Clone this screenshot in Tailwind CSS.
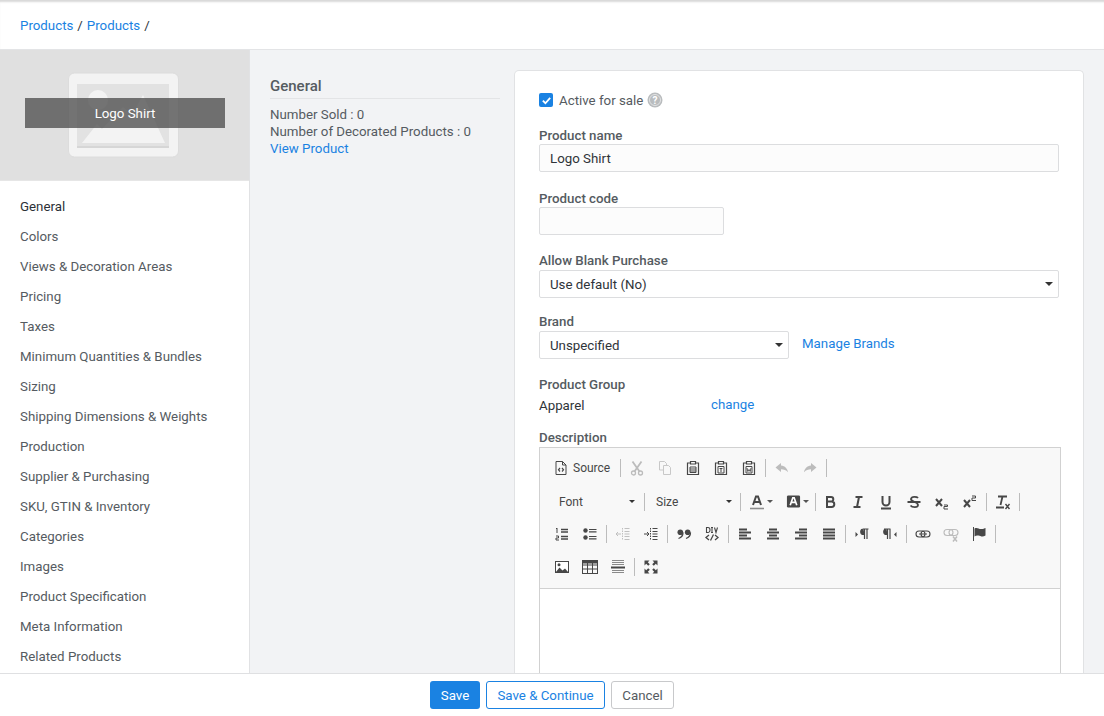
<!DOCTYPE html>
<html>
<head>
<meta charset="utf-8">
<script src="https://cdn.jsdelivr.net/npm/@tailwindcss/browser@4"></script>
</head>
<body class="w-[1104px] h-[716px] overflow-hidden bg-[#f2f3f5] font-['Roboto',sans-serif] text-[13.3px] leading-[18px] text-[#555b61]">
<svg class="hidden">
  <symbol id="paste" viewBox="0 0 16 16"><path d="M5 3H2.500v11.500h11V3H11M5.500 1.500h5V4h-5z" fill="none" stroke="currentColor" stroke-width="1.200"/><path d="M5 7h6v5.500H5zM5 9h6M5 11h6" fill="none" stroke="currentColor"/></symbol>
  <symbol id="pastet" viewBox="0 0 16 16"><path d="M5 3H2.500v11.500h11V3H11M5.500 1.500h5V4h-5z" fill="none" stroke="currentColor" stroke-width="1.200"/><path d="M5 6.500h6v6.500H5z" fill="none" stroke="currentColor"/><path d="M6.500 8.500h3M8 8.500V12" stroke="currentColor"/></symbol>
  <symbol id="pastew" viewBox="0 0 16 16"><path d="M5 3H2.500v11.500h11V3H11M5.500 1.500h5V4h-5z" fill="none" stroke="currentColor" stroke-width="1.200"/><path d="M5 6.500h6v6.500H5z" fill="none" stroke="currentColor"/><path d="M6 8l.8 3.500L8 9.500l1.200 2L10 8" fill="none" stroke="currentColor" stroke-width=".9"/></symbol>
  <symbol id="align" viewBox="0 0 16 16"><path d="M2 3.500h8M2 6.500h12M2 9.500h8M2 12.500h12" stroke="currentColor" stroke-width="2"/></symbol>
  <symbol id="center" viewBox="0 0 16 16"><path d="M4 3.500h8M2 6.500h12M4 9.500h8M2 12.500h12" stroke="currentColor" stroke-width="2"/></symbol>
  <symbol id="right" viewBox="0 0 16 16"><path d="M6 3.500h8M2 6.500h12M6 9.500h8M2 12.500h12" stroke="currentColor" stroke-width="2"/></symbol>
  <symbol id="just" viewBox="0 0 16 16"><path d="M2 3.500h12M2 6.500h12M2 9.500h12M2 12.500h12" stroke="currentColor" stroke-width="2"/></symbol>
</svg>

<div class="flex flex-col h-[716px]">
  <header class="h-[50px] shrink-0 bg-white border-b border-[#e3e4e6] shadow-[inset_0_3px_2px_-1px_#d9d9d9] flex items-center px-5 pt-[2px] text-[#2f3439]">
    <a class="text-[#1a82e2]">Products</a><span class="mx-[4px]">/</span><a class="text-[#1a82e2]">Products</a><span class="mx-[4px]">/</span>
  </header>

  <div class="flex flex-1 min-h-0 overflow-hidden">
    <aside class="w-[250px] shrink-0 bg-white border-r border-[#e1e2e4] overflow-hidden">
      <div class="h-[131px] bg-[#e0e0e0] border-b border-[#e6e6e6] relative flex items-center justify-center">
        <svg width="114" height="86" viewBox="0 0 114 86" class="ml-[1px] mt-[-1px]">
          <rect x=".5" y="1" width="110" height="84" rx="6" fill="#f3f3f3" stroke="#dcdcdc"/>
          <rect x="9" y="12" width="92" height="64" fill="#e2e2e2"/>
          <path d="M9 75h92" stroke="#d6d6d6" stroke-width="2"/>
          <circle cx="30" cy="28" r="10" fill="#f3f3f3"/>
          <path d="M14 71l15-19 5 5 21-22 9 8 11-20 22 48z" fill="#f3f3f3"/>
        </svg>
        <div class="absolute left-[25px] top-[48px] w-[200px] h-[30px] pt-[1px] bg-[#525252]/80 text-white flex items-center justify-center">Logo Shirt</div>
      </div>
      <nav class="flex flex-col pl-5 pt-[11px]">
        <a class="h-[30px] flex items-center text-[#2b3036]">General</a>
        <a class="h-[30px] flex items-center">Colors</a>
        <a class="h-[30px] flex items-center">Views &amp; Decoration Areas</a>
        <a class="h-[30px] flex items-center">Pricing</a>
        <a class="h-[30px] flex items-center">Taxes</a>
        <a class="h-[30px] flex items-center">Minimum Quantities &amp; Bundles</a>
        <a class="h-[30px] flex items-center">Sizing</a>
        <a class="h-[30px] flex items-center">Shipping Dimensions &amp; Weights</a>
        <a class="h-[30px] flex items-center">Production</a>
        <a class="h-[30px] flex items-center">Supplier &amp; Purchasing</a>
        <a class="h-[30px] flex items-center">SKU, GTIN &amp; Inventory</a>
        <a class="h-[30px] flex items-center">Categories</a>
        <a class="h-[30px] flex items-center">Images</a>
        <a class="h-[30px] flex items-center">Product Specification</a>
        <a class="h-[30px] flex items-center">Meta Information</a>
        <a class="h-[30px] flex items-center">Related Products</a>
      </nav>
    </aside>

    <section class="w-[264px] shrink-0 pl-5 pr-[14px] pt-[26px]">
      <h2 class="text-[15px] font-medium text-[#555b61] pb-[2px] border-b border-[#e3e4e6] leading-[20px]">General</h2>
      <div class="leading-[17px] pt-[7px]">
        <div>Number Sold : 0</div>
        <div>Number of Decorated Products : 0</div>
        <a class="text-[#1a82e2]">View Product</a>
      </div>
    </section>

    <main class="w-[570px] mt-5 bg-white border border-[#e1e2e4] rounded-t-[5px] border-b-0 pl-6 pr-[20px] pt-[19px] overflow-hidden">
      <div class="flex items-center h-[20px]">
        <span class="w-[14px] h-[14px] rounded-[2px] bg-[#1a82e2] flex items-center justify-center">
          <svg width="11" height="11" viewBox="0 0 12 12"><path d="M2 6.200l2.800 2.800L10 3.200" fill="none" stroke="#fff" stroke-width="2"/></svg>
        </span>
        <span class="ml-[6px] pt-[2px]">Active for sale</span>
        <svg class="ml-[4px]" width="16" height="16" viewBox="0 0 16 16"><circle cx="8" cy="8" r="7.500" fill="#b9bcbe"/><circle cx="8" cy="8" r="5.500" fill="none" stroke="#e2e3e4" stroke-width="1"/><text x="8" y="11.500" text-anchor="middle" font-size="10" font-weight="700" fill="#fff" font-family="Roboto">?</text></svg>
      </div>

      <label class="block mt-[17px] font-medium leading-[17px]">Product name</label>
      <div class="w-[520px] h-[28px] bg-[#fcfcfc] border border-[#dcdddf] rounded-[2px] flex items-center pl-[10px] pt-[2px] text-[#2f3439]">Logo Shirt</div>

      <label class="block mt-[18px] font-medium leading-[17px]">Product code</label>
      <div class="w-[185px] h-[28px] bg-[#fcfcfc] border border-[#dcdddf] rounded-[2px]"></div>

      <label class="block mt-[17px] font-medium leading-[17px]">Allow Blank Purchase</label>
      <div class="mt-[1px] w-[520px] h-[28px] bg-white border border-[#dcdddf] rounded-[2px] flex items-center justify-between pl-[10px] pr-[5px] text-[#2f3439]"><span class="pt-[2px]">Use default (No)</span><span class="w-0 h-0 border-x-[4px] border-x-transparent border-t-[4px] border-t-[#333]"></span></div>

      <label class="block mt-[15px] font-medium leading-[17px]">Brand</label>
      <div class="mt-[1px] flex items-start">
        <div class="w-[250px] h-[28px] bg-white border border-[#dcdddf] rounded-[2px] flex items-center justify-between pl-[10px] pr-[5px] text-[#2f3439]"><span class="pt-[2px]">Unspecified</span><span class="w-0 h-0 border-x-[4px] border-x-transparent border-t-[4px] border-t-[#333]"></span></div>
        <a class="ml-[13px] mt-[4px] text-[#1a82e2]">Manage Brands</a>
      </div>

      <label class="block mt-[17px] font-medium leading-[17px]">Product Group</label>
      <div class="flex mt-[4px] leading-[17px]"><span class="w-[172px] text-[#2f3439]">Apparel</span><a class="text-[#1a82e2] -mt-[1px]">change</a></div>

      <label class="block mt-[15px] font-medium leading-[17px]">Description</label>
      <div class="mt-[1px] w-[522px] h-[300px] border border-[#d1d1d1] bg-white">
        <div class="h-[141px] bg-[#f8f8f8] border-b border-[#d1d1d1] pl-[8px] pt-[4px] text-[#474747] text-[12px]">
          <!-- row 1 -->
          <div class="flex items-center h-[31px]">
            <div class="flex items-center w-[70px] pl-[5px]">
              <svg width="16" height="16" viewBox="0 0 16 16"><path d="M3 1.500h6.500L13 5v9.500H3z M9.500 1.500V5H13" fill="none" stroke="#474747"/><path d="M7 8L5.500 9.800 7 11.500M9 8l1.500 1.800L9 11.500" fill="none" stroke="#474747" stroke-width="1.200"/></svg>
              <span class="ml-[4px]">Source</span>
            </div>
            <span class="w-px h-[18px] bg-[#bcbcbc] ml-[2px] mr-[2px]"></span>
            <div class="w-[28px] flex justify-center text-[#bcbcbc]"><svg width="16" height="16" viewBox="0 0 16 16"><circle cx="4.500" cy="13" r="2" fill="none" stroke="currentColor" stroke-width="1.300"/><circle cx="11.500" cy="13" r="2" fill="none" stroke="currentColor" stroke-width="1.300"/><path d="M3.500 1.500l7 10M12.500 1.500l-7 10" stroke="currentColor" stroke-width="1.800"/></svg></div>
            <div class="w-[28px] flex justify-center text-[#c8c8c8]"><svg width="16" height="16" viewBox="0 0 16 16"><path d="M2.500 1.500h5l2 2V5M2.500 1.500v8.500H6M6.500 5.500h5l2 2v7h-7z" fill="none" stroke="currentColor"/></svg></div>
            <div class="w-[28px] flex justify-center"><svg width="16" height="16"><use href="#paste"/></svg></div>
            <div class="w-[28px] flex justify-center"><svg width="16" height="16"><use href="#pastet"/></svg></div>
            <div class="w-[28px] flex justify-center"><svg width="16" height="16"><use href="#pastew"/></svg></div>
            <span class="w-px h-[18px] bg-[#bcbcbc] ml-[2px] mr-[2px]"></span>
            <div class="w-[28px] flex justify-center text-[#bcbcbc]"><svg width="16" height="16" viewBox="0 0 16 16"><path d="M7 3L1.500 7.500 7 12V9.200c3 0 5 .8 7 3-.5-3.500-3-6.500-7-6.800z" fill="currentColor"/></svg></div>
            <div class="w-[28px] flex justify-center text-[#bcbcbc]"><svg width="16" height="16" viewBox="0 0 16 16"><path d="M9 3l5.500 4.500L9 12V9.200c-3 0-5 .8-7 3 .5-3.500 3-6.500 7-6.800z" fill="currentColor"/></svg></div>
            <span class="w-px h-[18px] bg-[#bcbcbc] ml-[2px] mr-[2px]"></span>
          </div>
          <!-- row 2 -->
          <div class="flex items-center h-[33px] mt-[2px]">
            <div class="w-[94px] pl-[11px] pr-[7px] flex items-center justify-between text-[#474747]">Font<span class="w-0 h-0 border-x-[3px] border-x-transparent border-t-[3px] border-t-[#333]"></span></div>
            <span class="w-px h-[18px] bg-[#bcbcbc] ml-[2px] mr-[2px]"></span>
            <div class="w-[91px] pl-[9px] pr-[6px] flex items-center justify-between text-[#474747]">Size<span class="w-0 h-0 border-x-[3px] border-x-transparent border-t-[3px] border-t-[#333]"></span></div>
            <span class="w-px h-[18px] bg-[#bcbcbc] ml-[2px] mr-[2px]"></span>
            <div class="w-[32px] ml-[2px] flex items-center justify-center gap-[2px]">
              <svg width="16" height="16" viewBox="0 0 16 16"><path d="M4 11l3-8.500h2L12 11M5.200 8h5.600" fill="none" stroke="#474747" stroke-width="2"/><path d="M1 14.500h14" stroke="#8d8d8d" stroke-width="1.600"/></svg>
              <span class="w-0 h-0 border-x-[3px] border-x-transparent border-t-[3px] border-t-[#555]"></span>
            </div>
            <div class="w-[32px] ml-[4px] flex items-center justify-center gap-[2px]">
              <svg width="15" height="15" viewBox="0 0 16 16"><rect x="1" y="1.500" width="14" height="13" rx="1.500" fill="#474747"/><path d="M4.500 12l2.800-8h1.400l2.800 8M5.700 9h4.600" fill="none" stroke="#fff" stroke-width="1.800"/></svg>
              <span class="w-0 h-0 border-x-[3px] border-x-transparent border-t-[3px] border-t-[#555]"></span>
            </div>
            <span class="w-px h-[18px] bg-[#bcbcbc] ml-[2px]"></span>
            <div class="w-[28px] flex justify-center"><svg width="16" height="16" viewBox="0 0 16 16"><path d="M5 3h4a2.300 2.300 0 0 1 0 4.600H5M5 7.600h4.600a2.600 2.600 0 0 1 0 5.400H5zM5 2V14" fill="none" stroke="#474747" stroke-width="2"/></svg></div>
            <div class="w-[28px] flex justify-center"><svg width="16" height="16" viewBox="0 0 16 16"><path d="M5.500 3h7M3.500 13h7M9 3L7 13" fill="none" stroke="#474747" stroke-width="2"/></svg></div>
            <div class="w-[28px] flex justify-center"><svg width="16" height="16" viewBox="0 0 16 16"><path d="M4.500 2v6a3.500 3.500 0 0 0 7 0V2M3 14.500h10" fill="none" stroke="#474747" stroke-width="2"/></svg></div>
            <div class="w-[28px] flex justify-center"><svg width="16" height="16" viewBox="0 0 16 16"><path d="M12 4c-1-1.300-6.500-2-7 1-.4 3 7 2.500 7 6 0 3-6 2.500-7.500 .5M1.500 8h13" fill="none" stroke="#474747" stroke-width="1.800"/></svg></div>
            <div class="w-[28px] flex justify-center"><svg width="16" height="16" viewBox="0 0 16 16"><path d="M2 5l6 7M8 5l-6 7" stroke="#474747" stroke-width="2"/><path d="M10 11h3.500v1.500H10V15h4" fill="none" stroke="#474747"/></svg></div>
            <div class="w-[28px] flex justify-center"><svg width="16" height="16" viewBox="0 0 16 16"><path d="M2 6l6 7M8 6l-6 7" stroke="#474747" stroke-width="2"/><path d="M10 2h3.500v2H10v2.500h4" fill="none" stroke="#474747"/></svg></div>
            <span class="w-px h-[18px] bg-[#bcbcbc] ml-[2px] mr-[2px]"></span>
            <div class="w-[28px] flex justify-center"><svg width="16" height="16" viewBox="0 0 16 16"><path d="M3 2.500h9M7.500 2.500L5.500 11M1 13.500h8" fill="none" stroke="#474747" stroke-width="1.800"/><path d="M10.500 10l4 5M14.500 10l-4 5" stroke="#474747" stroke-width="1.400"/></svg></div>
            <span class="w-px h-[18px] bg-[#bcbcbc] ml-[2px] mr-[2px]"></span>
          </div>
          <!-- row 3 -->
          <div class="flex items-center h-[32px]">
            <div class="w-[28px] flex justify-center"><svg width="16" height="16" viewBox="0 0 16 16"><path d="M7 3.500h7M7 6h7M7 10.500h7M7 13h7" stroke="#474747" stroke-width="1.300"/><path d="M3 2v5M2 3l1-1" fill="none" stroke="#474747"/><path d="M2 10h2.500v2H2v2h3" fill="none" stroke="#474747"/></svg></div>
            <div class="w-[28px] flex justify-center"><svg width="16" height="16" viewBox="0 0 16 16"><circle cx="3.500" cy="4.500" r="2.200" fill="#474747"/><circle cx="3.500" cy="11.500" r="2.200" fill="#474747"/><path d="M7 3.500h7.500M7 5.800h7.500M7 10.500h7.500M7 12.800h7.500" stroke="#474747" stroke-width="1.200"/></svg></div>
            <span class="w-px h-[18px] bg-[#bcbcbc] ml-[2px] mr-[2px]"></span>
            <div class="w-[28px] flex justify-center text-[#c0c0c0]"><svg width="16" height="16" viewBox="0 0 16 16"><path d="M7.500 2v12" stroke="currentColor" stroke-dasharray="1.500 1"/><path d="M9.500 2.500h5M9.500 5.500h5M9.500 8h5M9.500 10.500h5M9.500 13.500h5M1 8h5M3 6L1 8l2 2" fill="none" stroke="currentColor"/></svg></div>
            <div class="w-[28px] flex justify-center"><svg width="16" height="16" viewBox="0 0 16 16"><path d="M7.500 2v12" stroke="#474747" stroke-dasharray="1.500 1"/><path d="M9.500 2.500h5M9.500 5.500h5M9.500 8h5M9.500 10.500h5M9.500 13.500h5M1 8h5M4 6l2 2-2 2" fill="none" stroke="#474747"/></svg></div>
            <span class="w-px h-[18px] bg-[#bcbcbc] ml-[2px] mr-[2px]"></span>
            <div class="w-[28px] flex justify-center"><svg width="16" height="16" viewBox="0 0 16 16"><circle cx="4.300" cy="6.300" r="2.800" fill="#474747"/><circle cx="11.700" cy="6.300" r="2.800" fill="#474747"/><path d="M7 6.500c0 3-1.500 5-4.500 6M14.500 6.500c0 3-1.500 5-4.500 6" fill="none" stroke="#474747" stroke-width="1.300"/></svg></div>
            <div class="w-[28px] flex justify-center"><svg width="16" height="16" viewBox="0 0 16 16"><path d="M2.500 1.500h1.500a2 2.500 0 0 1 0 5H2.500zM7 1.500h2M8 1.500v5M7 6.500h2M10.500 1.500l1.500 5 1.500-5" fill="none" stroke="#474747" stroke-width="1.100"/><path d="M5 9l-3 2.500L5 14M11 9l3 2.500-3 2.500M9.500 8.500l-3 6" fill="none" stroke="#474747" stroke-width="1.300"/></svg></div>
            <span class="w-px h-[18px] bg-[#bcbcbc] ml-[2px] mr-[2px]"></span>
            <div class="w-[28px] flex justify-center text-[#474747]"><svg width="16" height="16"><use href="#align"/></svg></div>
            <div class="w-[28px] flex justify-center text-[#474747]"><svg width="16" height="16"><use href="#center"/></svg></div>
            <div class="w-[28px] flex justify-center text-[#474747]"><svg width="16" height="16"><use href="#right"/></svg></div>
            <div class="w-[28px] flex justify-center text-[#474747]"><svg width="16" height="16"><use href="#just"/></svg></div>
            <span class="w-px h-[18px] bg-[#bcbcbc] ml-[2px] mr-[2px]"></span>
            <div class="w-[28px] flex justify-center"><svg width="16" height="16" viewBox="0 0 16 16"><path d="M1.500 6l2.500 2.500L1.500 11z" fill="#474747"/><path d="M9 3h5.500M10.500 3v10M13 3v10M9.500 3a2.500 2.500 0 0 0 0 5.500h1" fill="#474747" stroke="#474747" stroke-width="1.200"/></svg></div>
            <div class="w-[28px] flex justify-center"><svg width="16" height="16" viewBox="0 0 16 16"><path d="M14.500 6L12 8.500 14.500 11z" fill="#474747"/><path d="M2 3h6.500M5.500 3v10M8 3v10M4.500 3a2.500 2.500 0 0 0 0 5.500h1" fill="#474747" stroke="#474747" stroke-width="1.200"/></svg></div>
            <span class="w-px h-[18px] bg-[#bcbcbc] ml-[2px] mr-[2px]"></span>
            <div class="w-[28px] flex justify-center"><svg width="16" height="16" viewBox="0 0 16 16"><rect x="1" y="5" width="9" height="6" rx="3" fill="none" stroke="#474747" stroke-width="1.100"/><rect x="6" y="5" width="9" height="6" rx="3" fill="none" stroke="#474747" stroke-width="1.100"/><path d="M4 8h8" stroke="#474747"/></svg></div>
            <div class="w-[28px] flex justify-center text-[#bcbcbc]"><svg width="16" height="16" viewBox="0 0 16 16"><rect x="1" y="3.500" width="9" height="6" rx="3" fill="none" stroke="currentColor" stroke-width="1.100"/><rect x="6" y="3.500" width="9" height="6" rx="3" fill="none" stroke="currentColor" stroke-width="1.100"/><path d="M10 10.500l4 5M14 10.500l-4 5" stroke="currentColor" stroke-width="1.500"/></svg></div>
            <div class="w-[28px] flex justify-center"><svg width="16" height="16" viewBox="0 0 16 16"><path d="M2.500 1v14" stroke="#474747"/><path d="M3.500 2.500c3-1.500 4.500 1 7 .5 1.500 0 3-.5 4-1v7.500c-3 2-5 .5-7 0-1.500-.3-3 0-4 1z" fill="#474747"/></svg></div>
            <span class="w-px h-[18px] bg-[#bcbcbc] ml-[2px] mr-[2px]"></span>
          </div>
          <!-- row 4 -->
          <div class="flex items-center h-[33px]">
            <div class="w-[28px] flex justify-center"><svg width="16" height="16" viewBox="0 0 16 16"><rect x="1.500" y="2.500" width="13" height="11" fill="#fff" stroke="#474747"/><path d="M1.500 13.500l4-5 3 3 2.500-2 3.500 4z" fill="#474747"/><circle cx="5" cy="5.800" r="1.500" fill="#474747"/></svg></div>
            <div class="w-[28px] flex justify-center"><svg width="16" height="16" viewBox="0 0 16 16"><rect x=".5" y="1.500" width="15" height="13" fill="none" stroke="#474747"/><path d="M.5 3h15" stroke="#474747" stroke-width="3"/><path d="M.5 6h15M.5 10h15M5.500 4v10M10.500 4v10" stroke="#474747"/></svg></div>
            <div class="w-[28px] flex justify-center"><svg width="16" height="16" viewBox="0 0 16 16"><path d="M2 1.500h12M2 3.500h12M2 5.500h12M2 11.500h12M2 13.500h12" stroke="#8a8a8a"/><path d="M1 8.500h14" stroke="#474747" stroke-width="2"/></svg></div>
            <span class="w-px h-[18px] bg-[#bcbcbc] ml-[2px] mr-[2px]"></span>
            <div class="w-[28px] flex justify-center"><svg width="16" height="16" viewBox="0 0 16 16"><path d="M1.500 1.500h5l-1.700 1.700 2 2-1.600 1.600-2-2L1.500 6.500zM14.500 1.500h-5l1.700 1.700-2 2 1.600 1.600 2-2 1.700 1.700zM1.500 14.500h5l-1.700-1.700 2-2-1.600-1.600-2 2-1.700-1.700zM14.500 14.500h-5l1.700-1.700-2-2 1.600-1.600 2 2 1.700-1.700z" fill="#474747"/></svg></div>
          </div>
        </div>
      </div>
    </main>
  </div>

  <footer class="h-[43px] shrink-0 bg-white border-t border-[#dfe0e2] flex items-start justify-center pt-[7px] gap-[6px]">
    <a class="w-[50px] h-[28px] pt-[2px] bg-[#1a82e2] text-white rounded-[3px] flex items-center justify-center">Save</a>
    <a class="w-[119px] h-[28px] pt-[2px] bg-white border border-[#1a82e2] text-[#1a82e2] rounded-[3px] flex items-center justify-center">Save &amp; Continue</a>
    <a class="w-[63px] h-[28px] pt-[2px] bg-white border border-[#c8c9cb] text-[#555b61] rounded-[3px] flex items-center justify-center">Cancel</a>
  </footer>
</div>
</body>
</html>
